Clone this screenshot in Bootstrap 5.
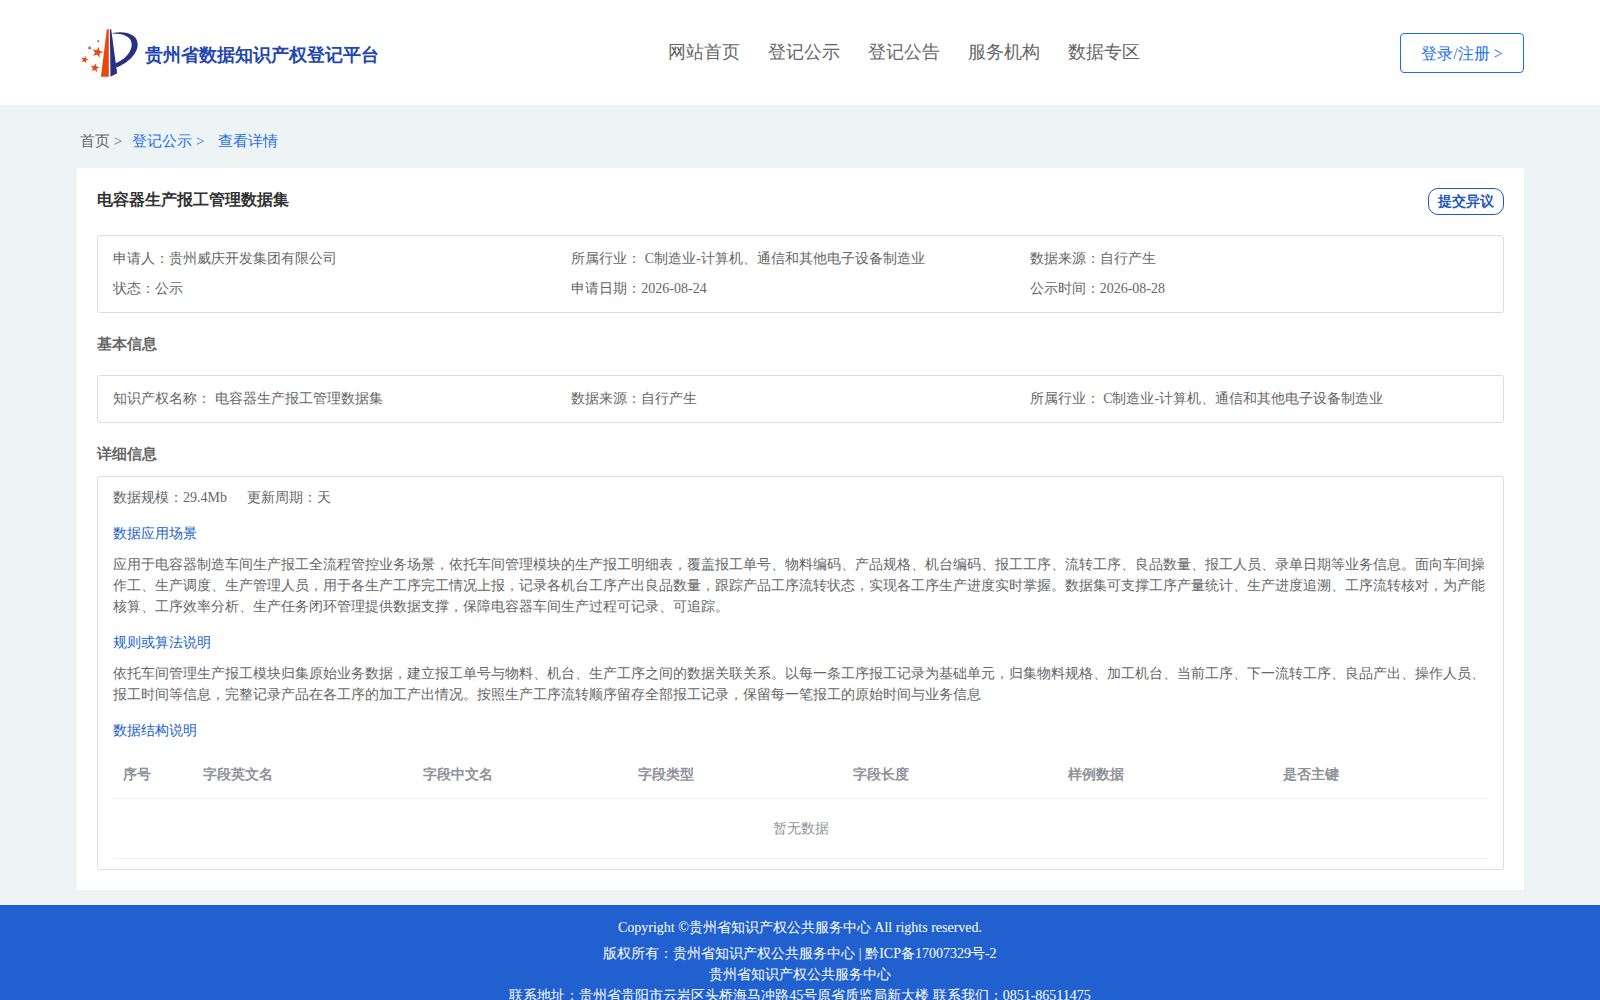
<!DOCTYPE html>
<html lang="en">
<head>
<meta charset="utf-8">
<meta name="viewport" content="width=device-width, initial-scale=1">
<title>贵州省数据知识产权登记平台</title>
<link href="https://cdn.jsdelivr.net/npm/bootstrap@5.3.0/dist/css/bootstrap.min.css" rel="stylesheet">
<style>
  body { font-family: "Liberation Serif", serif; font-size: 14px; line-height: 21px; color: #666; background: #eef3f6; }
  a { text-decoration: none; }
  .page-gutter { padding-left: 77px; padding-right: 76px; }
  .site-header { min-height: 105px; }
  .site-brand { padding: 0 28px 0 4px; gap: 7px; }
  .brand-name { font-size: 18px; font-weight: bold; color: #2346b4; line-height: 27px; padding-top: 6px; }
  .site-nav { gap: 28px; font-size: 18px; line-height: 27px; }
  .site-nav a { color: #666; }
  .btn-login { --bs-btn-color: #1b6fee; --bs-btn-border-color: #1b6fee; --bs-btn-padding-x: 20px; --bs-btn-font-size: 16px; --bs-btn-line-height: 24px; --bs-btn-border-radius: 4px; --bs-btn-hover-color: #fff; --bs-btn-hover-bg: #1b6fee; min-width: 124px; padding-top: 8px; padding-bottom: 6px; }
  .crumbs { font-size: 15px; line-height: 23px; padding: 25px 3px 15px; }
  .crumbs a { color: #1b6fee; margin-right: 10px; }
  .crumbs a.crumb-home { color: #666; }
  .panel { padding: 20px; margin-bottom: 15px; }
  .panel-title { font-size: 16px; line-height: 24px; font-weight: bold; color: #333; margin: 0; }
  .btn-objection { --bs-btn-color: #1f57c3; --bs-btn-border-color: #1f57c3; --bs-btn-padding-x: 9px; --bs-btn-padding-y: 2px; --bs-btn-font-size: 14px; --bs-btn-line-height: 21px; --bs-btn-border-radius: 10px; --bs-btn-font-weight: bold; --bs-btn-hover-color: #fff; --bs-btn-hover-bg: #1f57c3; }
  .info-box { border: 1px solid #ddd; border-radius: 3px; padding: 8px 15px; }
  .info-box .row > div { line-height: 30px; }
  .detail-box { border: 1px solid #ddd; border-radius: 3px; padding: 10px 15px; }
  .section-title { font-size: 15px; line-height: 22px; font-weight: bold; margin: 20px 0; }
  .section-title.tight { margin-bottom: 11px; }
  .sub-title { font-size: 14px; line-height: 21px; font-weight: normal; color: #2160cf; margin: 15px 0 10px; }
  .field-table { table-layout: fixed; color: #909399; --bs-table-color: #909399; border-color: #ebeef5; }
  .field-table th { padding: 13px 10px; }
  .field-table td { padding: 19px 10px; }
  .col-no { width: 80px; }
  .col-en { width: 220px; }
  .site-footer { background: #2160cf; padding: 12px 0; }
  .copyright { margin-bottom: 5px; }
</style>
<script src="https://cdn.jsdelivr.net/npm/bootstrap@5.3.0/dist/js/bootstrap.bundle.min.js"></script>
</head>
<body>
<header class="site-header page-gutter bg-white d-flex align-items-center justify-content-between">
  <div class="site-brand d-flex align-items-center">
    <svg width="57" height="50" viewBox="31 24 172 150" aria-hidden="true">
      <defs>
        <path id="logo-star" d="M0-10 2.400-3.200 9.500-3.100 3.800 1.200 5.900 8.100 0 4-5.900 8.100-3.800 1.200-9.500-3.100-2.400-3.200z"/>
      </defs>
      <g fill="#e8490f">
        <path d="M109 27h6v144H91z"/>
        <use href="#logo-star" transform="translate(81 97) rotate(14) scale(1.750)"/>
        <use href="#logo-star" transform="translate(73 144) rotate(8) scale(1.450)"/>
        <use href="#logo-star" transform="translate(42 119) rotate(12) scale(1.200)"/>
        <use href="#logo-star" transform="translate(57 84) rotate(25) scale(.7)"/>
        <use href="#logo-star" transform="translate(83 63) rotate(20) scale(.5)"/>
      </g>
      <g fill="#2a2f86">
        <path d="M118 27h4l18 133-20 11z"/>
        <path d="M126 39C165 31 201 42 202 72c1 30-31 58-64 71l-3-13c29-12 49-34 49-57 0-24-26-33-58-33z"/>
      </g>
    </svg>
    <span class="brand-name">贵州省数据知识产权登记平台</span>
  </div>
  <nav class="site-nav d-flex">
    <a href="#">网站首页</a>
    <a href="#">登记公示</a>
    <a href="#">登记公告</a>
    <a href="#">服务机构</a>
    <a href="#">数据专区</a>
  </nav>
  <button type="button" class="btn btn-login">登录/注册 &gt;</button>
</header>

<main class="page-gutter">
  <nav class="crumbs d-flex" aria-label="breadcrumb">
    <a class="crumb-home" href="#">首页 &gt;</a>
    <a href="#">登记公示 &gt;</a>
    <a class="ms-1" href="#">查看详情</a>
  </nav>

  <section class="panel bg-white">
    <div class="d-flex justify-content-between align-items-start mb-3 pb-1">
      <h1 class="panel-title">电容器生产报工管理数据集</h1>
      <button type="button" class="btn btn-objection">提交异议</button>
    </div>
    <div class="info-box">
      <div class="row g-0">
        <div class="col-4">申请人：贵州威庆开发集团有限公司</div>
        <div class="col-4">所属行业： C制造业-计算机、通信和其他电子设备制造业</div>
        <div class="col-4">数据来源：自行产生</div>
        <div class="col-4">状态：公示</div>
        <div class="col-4">申请日期：2026-08-24</div>
        <div class="col-4">公示时间：2026-08-28</div>
      </div>
    </div>

    <h2 class="section-title">基本信息</h2>
    <div class="info-box">
      <div class="row g-0">
        <div class="col-4">知识产权名称： 电容器生产报工管理数据集</div>
        <div class="col-4">数据来源：自行产生</div>
        <div class="col-4">所属行业： C制造业-计算机、通信和其他电子设备制造业</div>
      </div>
    </div>

    <h2 class="section-title tight">详细信息</h2>
    <div class="detail-box">
      <div class="d-flex">
        <span>数据规模：29.4Mb</span>
        <span class="ms-3 ps-1">更新周期：天</span>
      </div>
      <h3 class="sub-title">数据应用场景</h3>
      <p class="m-0">应用于电容器制造车间生产报工全流程管控业务场景，依托车间管理模块的生产报工明细表，覆盖报工单号、物料编码、产品规格、机台编码、报工工序、流转工序、良品数量、报工人员、录单日期等业务信息。面向车间操作工、生产调度、生产管理人员，用于各生产工序完工情况上报，记录各机台工序产出良品数量，跟踪产品工序流转状态，实现各工序生产进度实时掌握。数据集可支撑工序产量统计、生产进度追溯、工序流转核对，为产能核算、工序效率分析、生产任务闭环管理提供数据支撑，保障电容器车间生产过程可记录、可追踪。</p>
      <h3 class="sub-title">规则或算法说明</h3>
      <p class="m-0">依托车间管理生产报工模块归集原始业务数据，建立报工单号与物料、机台、生产工序之间的数据关联关系。以每一条工序报工记录为基础单元，归集物料规格、加工机台、当前工序、下一流转工序、良品产出、操作人员、报工时间等信息，完整记录产品在各工序的加工产出情况。按照生产工序流转顺序留存全部报工记录，保留每一笔报工的原始时间与业务信息</p>
      <h3 class="sub-title">数据结构说明</h3>
      <table class="table field-table mb-0">
        <thead>
          <tr>
            <th class="col-no" scope="col">序号</th>
            <th class="col-en" scope="col">字段英文名</th>
            <th scope="col">字段中文名</th>
            <th scope="col">字段类型</th>
            <th scope="col">字段长度</th>
            <th scope="col">样例数据</th>
            <th scope="col">是否主键</th>
          </tr>
        </thead>
        <tbody>
          <tr><td class="text-center" colspan="7">暂无数据</td></tr>
        </tbody>
      </table>
    </div>
  </section>
</main>

<footer class="site-footer text-white text-center">
  <div class="copyright">Copyright ©贵州省知识产权公共服务中心 All rights reserved.</div>
  <div>版权所有：贵州省知识产权公共服务中心 | 黔ICP备17007329号-2</div>
  <div>贵州省知识产权公共服务中心</div>
  <div>联系地址：贵州省贵阳市云岩区头桥海马冲路45号原省质监局新大楼 联系我们：0851-86511475</div>
</footer>
</body>
</html>
